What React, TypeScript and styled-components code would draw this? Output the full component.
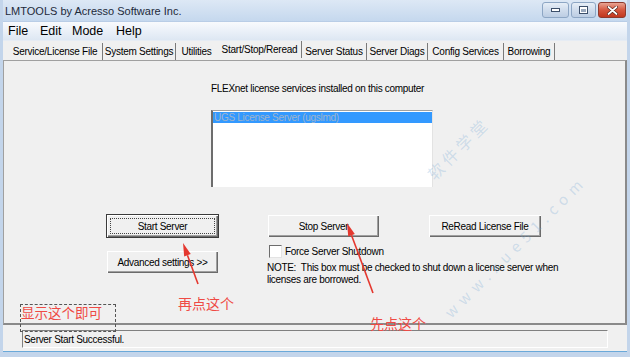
import React from "react";
import styled, { createGlobalStyle } from "styled-components";

const Global = createGlobalStyle`
  html, body { margin: 0; padding: 0; background: #f0f0f0; }
  body { width: 630px; height: 357px; overflow: hidden; }
`;

const UI = `"Liberation Sans", Arial, sans-serif`;
const CJK = `"Noto Sans CJK SC", "Liberation Sans", sans-serif`;

const Window = styled.div`
  position: relative;
  width: 630px;
  height: 357px;
  box-sizing: border-box;
  display: flex;
  flex-direction: column;
  background: #f0f0f0;
  border-left: 3px solid #c3d5eb;
  border-right: 3px solid #c3d5eb;
  border-bottom: 5px solid #c3d5eb;
  box-shadow: inset 0 -1px 0 #6aa9d9;
  font-family: ${UI};
  overflow: hidden;
`;

const TitleBar = styled.div`
  height: 21px;
  margin: 0 -3px;
  padding: 0 4px 0 5px;
  display: flex;
  align-items: center;
  background: linear-gradient(#dde8f5, #c5d8ee);
  border-bottom: 1px solid #b9cde6;
`;

const Title = styled.div`
  flex: 1;
  font-size: 11px;
  color: #1e2a3a;
  padding-top: 1px;
`;

const Caption = styled.div`
  display: flex;
  gap: 2px;
  align-self: flex-start;
  margin-top: 2px;
`;

const CapBtn = styled.div<{ $w: number; $close?: boolean }>`
  width: ${(p) => p.$w}px;
  height: 16px;
  box-sizing: border-box;
  border-radius: 3px;
  display: flex;
  align-items: center;
  justify-content: center;
  border: 1px solid ${(p) => (p.$close ? "#8e3a2e" : "#8da6c4")};
  background: ${(p) =>
    p.$close
      ? "linear-gradient(#e8a493 0%, #d6573f 50%, #c1371f 100%)"
      : "linear-gradient(#e7eef7 0%, #cfdcec 50%, #bccde3 100%)"};
`;

const MenuBar = styled.div`
  height: 18px;
  display: flex;
  align-items: center;
  padding-left: 2px;
  background: linear-gradient(#f8fafd, #dde7f3);
  border-bottom: 1px solid #e6ecf4;
`;

const MenuItem = styled.span<{ $w: number }>`
  width: ${(p) => p.$w}px;
  font-size: 12.5px;
  color: #000;
  padding-left: 3px;
`;

const TabStrip = styled.div`
  height: 18px;
  margin-top: 1px;
  display: flex;
  align-items: center;
  padding-left: 5px;
`;

const Tab = styled.div<{ $w: number; $sep: boolean; $sel?: boolean }>`
  width: ${(p) => p.$w}px;
  box-sizing: border-box;
  height: 17px;
  display: flex;
  align-items: center;
  justify-content: center;
  font-size: 10px;
  letter-spacing: -0.25px;
  color: #000;
  border-right: 1px solid ${(p) => (p.$sep ? "#7a7a7a" : "transparent")};
  margin-top: ${(p) => (p.$sel ? "-3px" : "0")};
  white-space: nowrap;
`;

const Panel = styled.div`
  height: 265px;
  box-sizing: border-box;
  border: 1px solid #a0a0a0;
  border-right: 2px solid #8a8a8a;
  border-bottom: 2px solid #8a8a8a;
  display: flex;
  flex-direction: column;
  padding-top: 21px;
  font-size: 10px;
  letter-spacing: -0.3px;
`;

const TopSection = styled.div`
  padding-left: 207px;
  display: flex;
  flex-direction: column;
`;

const Label = styled.div`
  line-height: 13px;
  color: #000;
`;

const ListBox = styled.div`
  margin-top: 15px;
  width: 222px;
  height: 77px;
  box-sizing: border-box;
  background: #fff;
  border-left: 2px solid #6d6d6d;
  border-top: 1px solid #a0a0a0;
  border-right: 1px solid #e3e3e3;
  padding: 1px 0 0 0;
`;

const ListItem = styled.div`
  height: 11px;
  line-height: 11px;
  background: #3399ff;
  color: #9fb4cc;
  padding-left: 1px;
`;

const ButtonGrid = styled.div`
  margin-top: 27px;
  padding-left: 102px;
  display: grid;
  grid-template-columns: 113px 113px 114px;
  column-gap: 48px;
  align-items: start;
`;

const Button = styled.div<{ $focus?: boolean }>`
  height: 24px;
  box-sizing: border-box;
  display: flex;
  align-items: center;
  justify-content: center;
  color: #000;
  background: #f0f0f0;
  border: 1px solid ${(p) => (p.$focus ? "#3a3a3a" : "transparent")};
  box-shadow: inset 1px 1px 0 #ffffff, inset -1px -1px 0 #6b6b6b,
    inset -2px -2px 0 #a0a0a0;
  position: relative;
  ${(p) =>
    p.$focus
      ? `&::after { content: ""; position: absolute; inset: 3px; border: 1px dotted #444; }`
      : ""}
`;

const SecondCol = styled.div`
  margin-top: 12px;
`;

const Options = styled.div`
  grid-column: 2 / span 2;
  display: flex;
  flex-direction: column;
  margin-top: 7px;
  padding-left: 2px;
`;

const CheckRow = styled.div`
  display: flex;
  align-items: center;
  gap: 3px;
`;

const CheckBox = styled.div`
  width: 13px;
  height: 13px;
  box-sizing: border-box;
  background: #fff;
  border-top: 1px solid #6d6d6d;
  border-left: 1px solid #6d6d6d;
  border-right: 1px solid #e3e3e3;
  border-bottom: 1px solid #e3e3e3;
`;

const Note = styled.div`
  margin-top: 4px;
  margin-left: -2px;
  line-height: 12px;
  white-space: nowrap;
`;

const StatusBar = styled.div`
  margin: 5px 19px 0 19px;
  height: 18px;
  box-sizing: border-box;
  border-top: 1px solid #808080;
  border-left: 1px solid #808080;
  border-right: 1px solid #ffffff;
  border-bottom: 1px solid #ffffff;
  display: flex;
  align-items: center;
  padding-left: 1px;
  font-size: 10px;
  letter-spacing: -0.3px;
`;

const Annot = styled.div<{ $x: number; $y: number; $size: number }>`
  position: absolute;
  left: ${(p) => p.$x}px;
  top: ${(p) => p.$y}px;
  font-family: ${CJK};
  font-size: ${(p) => p.$size}px;
  line-height: 1;
  color: #ef4a44;
  white-space: nowrap;
`;

const DashBox = styled.div`
  position: absolute;
  left: 17px;
  top: 304px;
  width: 96px;
  height: 28px;
  box-sizing: border-box;
  border: 1px dashed #555;
`;

const Watermark = styled.div<{ $x: number; $y: number; $size: number; $ls: number }>`
  position: absolute;
  left: ${(p) => p.$x}px;
  top: ${(p) => p.$y}px;
  transform: translate(-50%, -50%) rotate(-45deg);
  font-family: ${CJK};
  font-size: ${(p) => p.$size}px;
  letter-spacing: ${(p) => p.$ls}px;
  color: rgba(120, 170, 215, 0.3);
  white-space: nowrap;
  pointer-events: none;
`;

const Overlay = styled.svg`
  position: absolute;
  left: -3px;
  top: 0;
  pointer-events: none;
`;

const tabs = [
  { t: "Service/License File", w: 95, sep: true },
  { t: "System Settings", w: 73, sep: true },
  { t: "Utilities", w: 42, sep: false },
  { t: "Start/Stop/Reread", w: 84, sep: true, sel: true },
  { t: "Server Status", w: 65, sep: true },
  { t: "Server Diags", w: 61, sep: true },
  { t: "Config Services", w: 76, sep: true },
  { t: "Borrowing", w: 51, sep: true },
];

function Arrow({ x1, y1, x2, y2 }: { x1: number; y1: number; x2: number; y2: number }) {
  const dx = x2 - x1;
  const dy = y2 - y1;
  const len = Math.hypot(dx, dy);
  const ux = dx / len;
  const uy = dy / len;
  const hl = 13;
  const hw = 3.5;
  const bx = x2 - ux * hl;
  const by = y2 - uy * hl;
  const px = -uy;
  const py = ux;
  const pts = `${x2},${y2} ${bx + px * hw},${by + py * hw} ${bx - px * hw},${by - py * hw}`;
  return (
    <g>
      <line x1={x1} y1={y1} x2={bx} y2={by} stroke="#e4382f" strokeWidth={1.6} />
      <polygon points={pts} fill="#e4382f" />
    </g>
  );
}

export default function App() {
  return (
    <>
      <Global />
      <Window>
        <TitleBar>
          <Title>LMTOOLS by Acresso Software Inc.</Title>
          <Caption>
            <CapBtn $w={27}>
              <svg width="9" height="4" viewBox="0 0 9 4">
                <rect x="0.5" y="0.5" width="8" height="3" fill="#fff" stroke="#3c4f6a" />
              </svg>
            </CapBtn>
            <CapBtn $w={25}>
              <svg width="9" height="8" viewBox="0 0 9 8">
                <rect x="0.5" y="0.5" width="8" height="7" fill="#fff" stroke="#3c4f6a" />
                <rect x="2" y="3" width="5" height="3" fill="#9aa9bd" />
              </svg>
            </CapBtn>
            <CapBtn $w={28} $close>
              <svg width="11" height="9" viewBox="0 0 11 9">
                <path d="M1.5 1 L9.5 8 M9.5 1 L1.5 8" stroke="#4a1a12" strokeWidth="3" strokeLinecap="round" />
                <path d="M1.5 1 L9.5 8 M9.5 1 L1.5 8" stroke="#fff" strokeWidth="1.8" strokeLinecap="round" />
              </svg>
            </CapBtn>
          </Caption>
        </TitleBar>
        <MenuBar>
          <MenuItem $w={29}>File</MenuItem>
          <MenuItem $w={29}>Edit</MenuItem>
          <MenuItem $w={41}>Mode</MenuItem>
          <MenuItem $w={30}>Help</MenuItem>
        </MenuBar>
        <TabStrip>
          {tabs.map((t) => (
            <Tab key={t.t} $w={t.w} $sep={t.sep} $sel={t.sel}>
              {t.t}
            </Tab>
          ))}
        </TabStrip>
        <Panel>
          <TopSection>
            <Label>FLEXnet license services installed on this computer</Label>
            <ListBox>
              <ListItem>UGS License Server (ugslmd)</ListItem>
            </ListBox>
          </TopSection>
          <ButtonGrid>
            <Button $focus>Start Server</Button>
            <Button>Stop Server</Button>
            <Button>ReRead License File</Button>
            <SecondCol>
              <Button>Advanced settings &gt;&gt;</Button>
            </SecondCol>
            <Options>
              <CheckRow>
                <CheckBox />
                <span>Force Server Shutdown</span>
              </CheckRow>
              <Note>
                NOTE:&nbsp; This box must be checked to shut down a license server when
                <br />
                licenses are borrowed.
              </Note>
            </Options>
          </ButtonGrid>
        </Panel>
        <StatusBar>Server Start Successful.</StatusBar>

        <Watermark $x={455} $y={148} $size={16} $ls={4}>软件学堂</Watermark>
        <Watermark $x={512} $y={246} $size={15} $ls={6}>www.xue51.com</Watermark>

        <Annot $x={175} $y={296} $size={14}>再点这个</Annot>
        <Annot $x={367} $y={316} $size={14}>先点这个</Annot>
        <Annot $x={18} $y={306} $size={13.5}>显示这个即可</Annot>
        <DashBox />
        <Overlay width="630" height="357">
          <Arrow x1={198} y1={284} x2={183} y2={243} />
          <Arrow x1={373} y1={293} x2={347} y2={223} />
        </Overlay>
      </Window>
    </>
  );
}
